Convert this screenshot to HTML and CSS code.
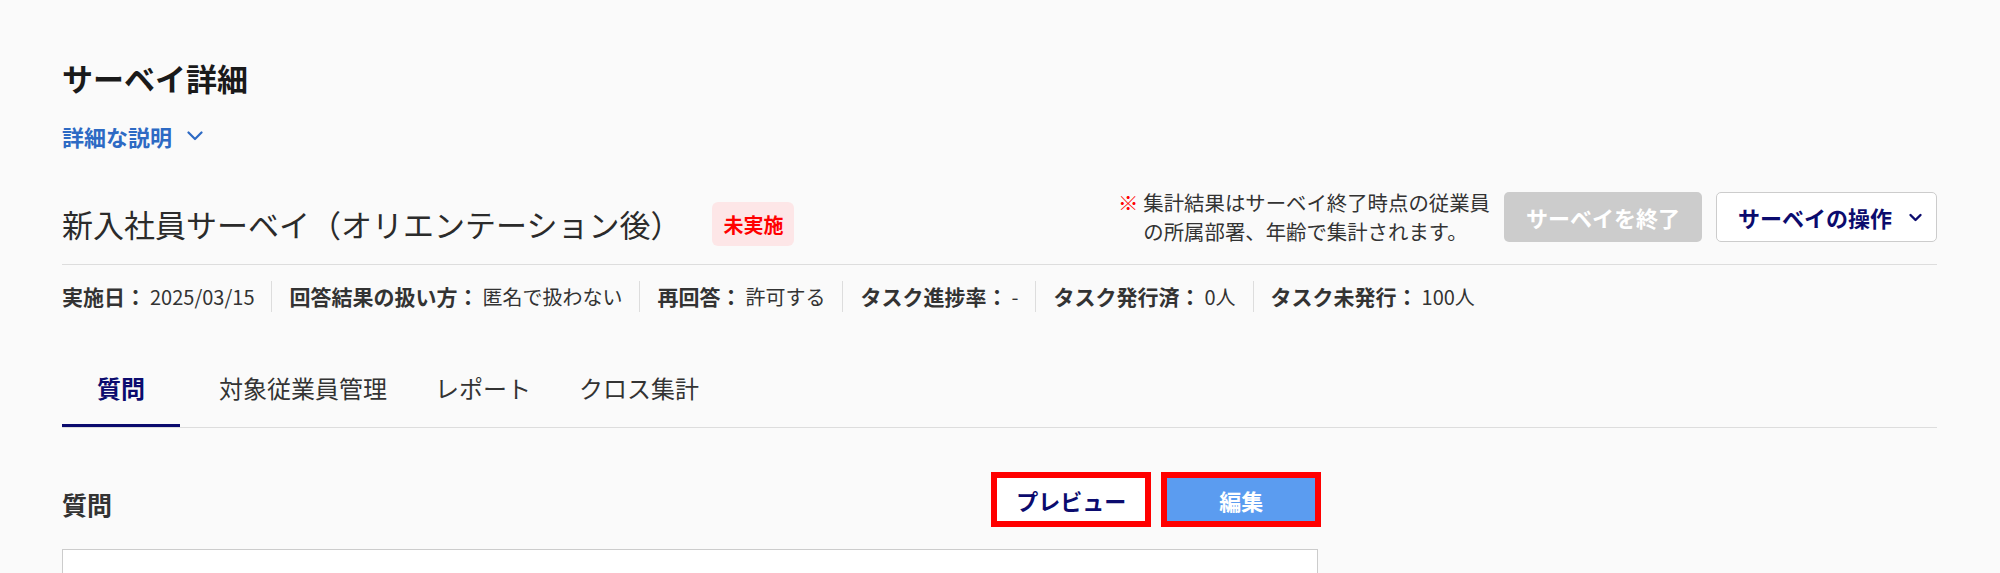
FILE: index.html
```html
<!DOCTYPE html>
<html lang="ja">
<head>
<meta charset="utf-8">
<title>サーベイ詳細</title>
<link rel="stylesheet" href="styles.css">
</head>
<body>
<div class="page">
  <header class="page-header">
    <h1 class="page-title">サーベイ詳細</h1>
    <div class="desc-row">
      <button class="desc-toggle" type="button">詳細な説明<svg class="chev-desc" width="16" height="10" viewBox="0 0 16 10"><path d="M1.5 1.5 L8 8 L14.5 1.5" fill="none" stroke="currentColor" stroke-width="2.2" stroke-linecap="round" stroke-linejoin="round"/></svg></button>
    </div>
    <div class="survey-row">
      <div class="survey-name">
        <h2 class="survey-title">新入社員サーベイ（オリエンテーション後）</h2>
        <span class="badge">未実施</span>
      </div>
      <div class="survey-actions">
        <p class="note"><span class="note-mark">※</span><span class="note-text">集計結果はサーベイ終了時点の従業員<br>の所属部署、年齢で集計されます。</span></p>
        <button class="btn btn-disabled" type="button">サーベイを終了</button>
        <button class="btn btn-menu" type="button">サーベイの操作<svg width="15" height="9" viewBox="0 0 15 9"><path d="M2.5 2 L7.5 7 L12.5 2" fill="none" stroke="currentColor" stroke-width="2.4" stroke-linecap="round" stroke-linejoin="round"/></svg></button>
      </div>
    </div>
  </header>

  <dl class="meta">
    <div class="meta-item"><dt>実施日：</dt><dd>2025/03/15</dd></div>
    <div class="meta-item"><dt>回答結果の扱い方：</dt><dd>匿名で扱わない</dd></div>
    <div class="meta-item"><dt>再回答：</dt><dd>許可する</dd></div>
    <div class="meta-item"><dt>タスク進捗率：</dt><dd>-</dd></div>
    <div class="meta-item"><dt>タスク発行済：</dt><dd>0人</dd></div>
    <div class="meta-item"><dt>タスク未発行：</dt><dd>100人</dd></div>
  </dl>

  <nav class="tabs">
    <a class="tab active">質問</a>
    <a class="tab">対象従業員管理</a>
    <a class="tab">レポート</a>
    <a class="tab">クロス集計</a>
  </nav>

  <div class="content">
    <section class="questions">
      <div class="section-head">
        <h3 class="section-title">質問</h3>
        <div class="section-buttons">
          <button class="qbtn qbtn-preview" type="button">プレビュー</button>
          <button class="qbtn qbtn-edit" type="button">編集</button>
        </div>
      </div>
      <div class="question-box"></div>
    </section>
    <aside class="side"></aside>
  </div>
</div>
</body>
</html>
```

FILE: styles.css
```css
* { box-sizing: border-box; }
html, body { margin: 0; padding: 0; }
body {
  background: #fafafa;
  font-family: "Noto Sans CJK JP", "Noto Sans", sans-serif;
  color: #333;
}
button { font: inherit; cursor: pointer; }

.page { padding: 56px 63px 0 62px; }

.page-title {
  margin: 0;
  font-size: 31px;
  line-height: 44px;
  font-weight: 700;
  color: #1a1a1a;
}

.desc-row { display: flex; margin-top: 20px; }
.desc-toggle {
  display: flex;
  align-items: center;
  gap: 15px;
  padding: 0;
  border: 0;
  background: none;
  font-size: 22px;
  line-height: 32px;
  font-weight: 700;
  color: #2d6ac4;
}

.survey-row {
  display: flex;
  justify-content: space-between;
  align-items: flex-end;
  margin-top: 36px;
  padding-bottom: 18px;
  border-bottom: 1px solid #dddddd;
}
.survey-name { display: flex; align-items: center; gap: 31px; }
.survey-title {
  margin: 0;
  font-size: 31px;
  line-height: 44px;
  font-weight: 400;
  color: #2b2b2b;
}
.badge {
  display: flex;
  align-items: center;
  height: 44px;
  padding: 0 11px;
  border-radius: 6px;
  background: #fde6e7;
  color: #ff0000;
  font-size: 20px;
  font-weight: 700;
}

.survey-actions { display: flex; align-items: center; gap: 14px; }
.note {
  display: flex;
  margin: 0;
  font-size: 20.4px;
  line-height: 29px;
  color: #333;
}
.note-mark { color: #ff0000; margin-right: 5px; }

.btn {
  display: flex;
  align-items: center;
  height: 50px;
  border-radius: 5px;
  font-size: 22px;
  font-weight: 700;
}
.btn-disabled {
  background: #cccccc;
  color: #ffffff;
  border: 0;
  padding: 0 22px;
}
.btn-menu {
  background: #ffffff;
  border: 1px solid #cccccc;
  color: #0b0b6e;
  padding: 0 13px 0 21px;
  gap: 16px;
}

.meta {
  display: flex;
  align-items: center;
  margin: 16px 0 0;
  padding: 0;
  font-size: 21px;
  line-height: 30px;
}
.meta-item {
  display: flex;
  align-items: baseline;
  padding: 0 17px 0 17px;
  border-left: 1px solid #dddddd;
}
.meta-item:first-child { padding-left: 0; border-left: 0; }
.meta dt { font-weight: 700; color: #333; }
.meta dd { margin: 0 0 0 4px; font-size: 20px; color: #333; }

.tabs {
  display: flex;
  gap: 30px;
  margin-top: 58px;
  border-bottom: 1px solid #dddddd;
}
.tab {
  padding: 0 9px 18px;
  text-align: center;
  font-size: 24px;
  line-height: 36px;
  color: #333;
  border-bottom: 3px solid transparent;
}
.tab.active {
  min-width: 118px;
  color: #0b0b6e;
  font-weight: 700;
  border-bottom-color: #0b0b6e;
}

.content {
  display: grid;
  grid-template-columns: 67% 1fr;
  margin-top: 47px;
}
.section-head {
  display: flex;
  justify-content: space-between;
  align-items: flex-end;
}
.section-title {
  margin: 0;
  padding-bottom: 2px;
  font-size: 25px;
  line-height: 36px;
  font-weight: 700;
  color: #333;
}
.section-buttons { display: flex; gap: 16px; }
.qbtn {
  width: 154px;
  height: 49px;
  border: 1px solid #cccccc;
  border-radius: 0;
  font-size: 22px;
  font-weight: 700;
  outline: 6px solid #ff0000;
  outline-offset: -3px;
}
.qbtn-preview { background: #ffffff; color: #0b0b6e; }
.qbtn-edit { background: #5b9cf0; color: #ffffff; border-color: #5b9cf0; }

.question-box {
  margin-top: 25px;
  height: 200px;
  background: #ffffff;
  border: 1px solid #cccccc;
}
```
